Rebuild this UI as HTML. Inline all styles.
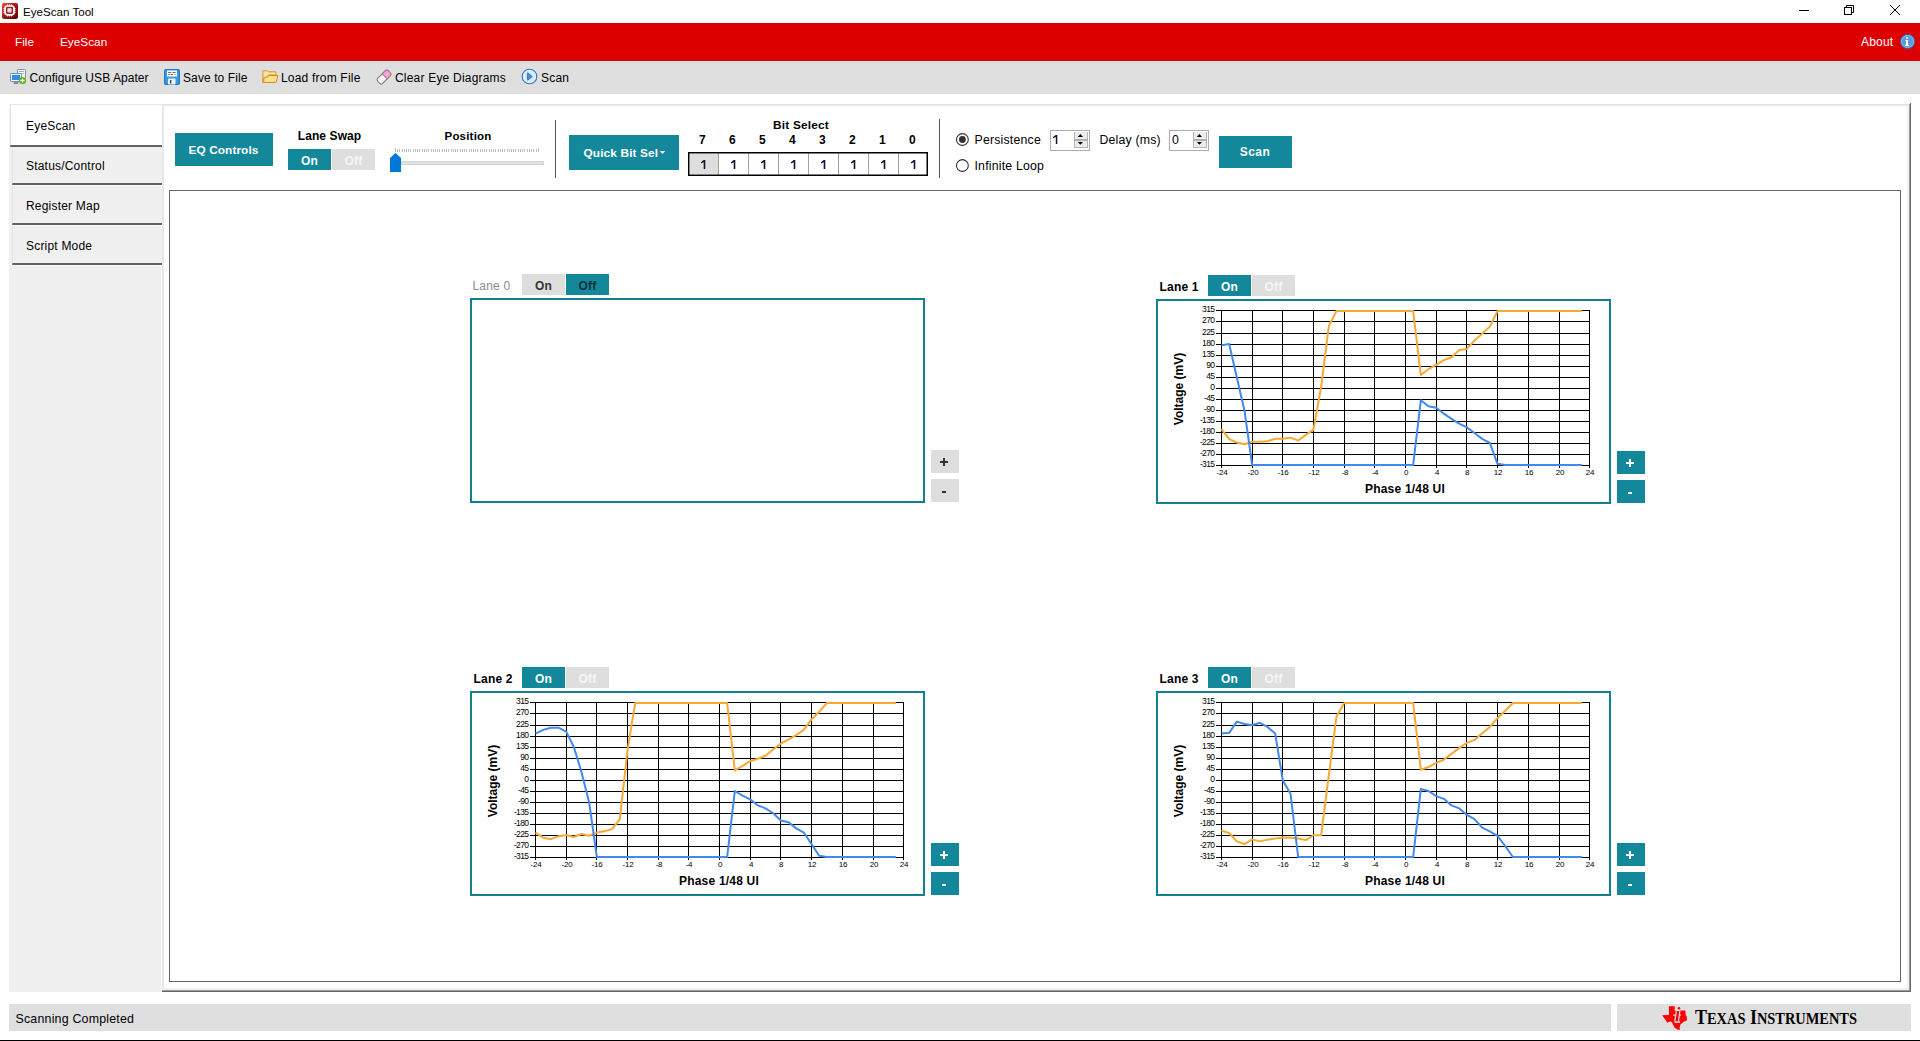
<!DOCTYPE html>
<html><head><meta charset="utf-8"><style>
html,body{margin:0;padding:0;width:1920px;height:1041px;overflow:hidden;background:#fff;font-family:"Liberation Sans", sans-serif;}
.r{position:absolute;}
.t{position:absolute;white-space:nowrap;font-family:"Liberation Sans", sans-serif;}
svg.r{overflow:visible}
</style></head><body>
<div class="r" style="left:0px;top:0px;width:1920px;height:23px;background:#fff"></div>
<svg class="r" style="left:2px;top:3px" width="16" height="16" viewBox="0 0 16 16">
<defs><linearGradient id="gi" x1="0" y1="0" x2="1" y2="1"><stop offset="0" stop-color="#f04838"/><stop offset="0.45" stop-color="#a81a18"/><stop offset="1" stop-color="#5c0404"/></linearGradient>
<radialGradient id="gc" cx="0.45" cy="0.45" r="0.6"><stop offset="0" stop-color="#fff"/><stop offset="1" stop-color="#d89a9a"/></radialGradient></defs>
<rect x="0" y="0" width="16" height="16" rx="2" fill="url(#gi)"/>
<rect x="3.1" y="3" width="8.8" height="8.8" rx="2.2" fill="none" stroke="#fff" stroke-width="1.7"/>
<g fill="#fff"><rect x="5" y="1.4" width="1.1" height="1.4"/><rect x="7" y="1.4" width="1.1" height="1.4"/><rect x="9" y="1.4" width="1.1" height="1.4"/>
<rect x="5" y="12" width="1.1" height="1.4"/><rect x="7" y="12" width="1.1" height="1.4"/><rect x="9" y="12" width="1.1" height="1.4"/>
<rect x="1.5" y="5" width="1.4" height="1.1"/><rect x="1.5" y="7" width="1.4" height="1.1"/><rect x="1.5" y="9" width="1.4" height="1.1"/>
<rect x="12.1" y="5" width="1.4" height="1.1"/><rect x="12.1" y="7" width="1.4" height="1.1"/><rect x="12.1" y="9" width="1.4" height="1.1"/></g>
<rect x="4.2" y="4.1" width="6.6" height="6.6" rx="1.5" fill="#9a2424"/>
<rect x="5.2" y="5.1" width="4.6" height="4.6" rx="1" fill="url(#gc)"/>
</svg>
<div class="t" style="left:23px;top:6.18px;font-size:11.6px;line-height:11.6px;font-weight:normal;color:#000;">EyeScan Tool</div>
<svg class="r" style="left:1790px;top:0px" width="130" height="23" viewBox="0 0 130 23">
<path d="M9 10.5H19" stroke="#000" stroke-width="1"/>
<rect x="54.5" y="7.5" width="7" height="7" fill="none" stroke="#000" stroke-width="1"/>
<path d="M56.5 7V5.5H63.5V12.5H62" fill="none" stroke="#000" stroke-width="1"/>
<path d="M100 5L110 15M110 5L100 15" stroke="#000" stroke-width="1"/>
</svg>
<div class="r" style="left:0px;top:23px;width:1920px;height:38px;background:#dd0000"></div>
<div class="t" style="left:15px;top:37.01px;font-size:11.8px;line-height:11.8px;font-weight:normal;color:#fff;">File</div>
<div class="t" style="left:60px;top:37.01px;font-size:11.8px;line-height:11.8px;font-weight:normal;color:#fff;">EyeScan</div>
<div class="t" style="left:1861px;top:35.84px;font-size:12px;line-height:12px;font-weight:normal;color:#fff;;letter-spacing:0.2px">About</div>
<svg class="r" style="left:1899px;top:33px" width="17" height="17" viewBox="0 0 17 17">
<circle cx="8.6" cy="8.5" r="7.1" fill="#5b9cd8" stroke="#1f66c2" stroke-width="0.9"/>
<circle cx="8.6" cy="8.5" r="6" fill="none" stroke="#a8cdef" stroke-width="0.7" opacity="0.8"/>
<rect x="7.1" y="4" width="1.9" height="1.7" rx="0.5" fill="#fff"/>
<path d="M6.6 7.1H9V11.8H10V12.9H6.1V11.8H7.1V8H6.6Z" fill="#fff"/>
</svg>
<div class="r" style="left:0px;top:61px;width:1920px;height:33px;background:#dfdfdf"></div>
<svg class="r" style="left:9px;top:68px" width="18" height="18" viewBox="0 0 18 18">
<rect x="8.5" y="1.5" width="8" height="9" rx="0.8" fill="#f4f8fc" stroke="#7a8da2" stroke-width="1"/>
<path d="M10 3.5h5M10 5.5h5" stroke="#9fb3c8" stroke-width="1"/>
<rect x="1.5" y="5.5" width="11" height="8" rx="0.8" fill="#eef4fa" stroke="#7a8da2" stroke-width="1"/>
<rect x="3" y="7" width="8" height="5" fill="#2d8ee8"/>
<rect x="4.5" y="14" width="5" height="2" rx="0.8" fill="#7a8da2"/>
<circle cx="13.5" cy="12.5" r="3.6" fill="#5fb01f"/>
<path d="M13.5 10.4v4.2M11.4 12.5h4.2" stroke="#fff" stroke-width="1.3"/>
</svg>
<div class="t" style="left:29.5px;top:71.84px;font-size:12px;line-height:12px;font-weight:normal;color:#000;;letter-spacing:0.05px">Configure USB Apater</div>
<svg class="r" style="left:164px;top:69px" width="16" height="16" viewBox="0 0 16 16">
<rect x="0.6" y="0.6" width="14.8" height="14.8" rx="1.5" fill="#3c9be0" stroke="#1a7cc4" stroke-width="1.2"/>
<rect x="3" y="1.5" width="10" height="6" rx="0.6" fill="#fff"/>
<path d="M4.2 3.5h3M8.5 3.5h3M4.2 5.5h1.5M6.5 5.5h2.5M10.5 5.5h1" stroke="#555" stroke-width="0.9"/>
<rect x="4" y="9.5" width="7.5" height="6" rx="0.8" fill="#eef2f6"/>
<rect x="6" y="11" width="1.3" height="3.5" fill="#333"/>
</svg>
<div class="t" style="left:183px;top:71.84px;font-size:12px;line-height:12px;font-weight:normal;color:#000;;letter-spacing:0.1px">Save to File</div>
<svg class="r" style="left:262px;top:70px" width="17" height="14" viewBox="0 0 17 14">
<path d="M0.8 1.5Q0.8 0.8 1.5 0.8H5.5L6.5 1.8H13.5Q14 1.8 14 2.4V5H6.5L5 7" fill="#fbe39a" stroke="#d9902a" stroke-width="1"/>
<path d="M0.8 1.5V12.5H14L16 5.5H6.8L5.2 7.2H2.2L0.8 12.5" fill="#f6d064" stroke="#d9902a" stroke-width="1"/>
<path d="M3 11.5H13.5L15 6.5H7.2L5.8 8H3.8Z" fill="#fde48b"/>
</svg>
<div class="t" style="left:281px;top:71.84px;font-size:12px;line-height:12px;font-weight:normal;color:#000;;letter-spacing:0.2px">Load from File</div>
<svg class="r" style="left:375px;top:68px" width="18" height="18" viewBox="0 0 18 18">
<g transform="rotate(-45 9 9)">
<rect x="1.5" y="5.5" width="15" height="7" rx="2" fill="#f2f2f2" stroke="#777" stroke-width="1"/>
<path d="M10 5.5H14.5Q16.5 5.5 16.5 7.5V10.5Q16.5 12.5 14.5 12.5H10Z" fill="#f0a8cc" stroke="#b06aa0" stroke-width="1"/>
</g>
</svg>
<div class="t" style="left:395px;top:71.84px;font-size:12px;line-height:12px;font-weight:normal;color:#000;;letter-spacing:0.2px">Clear Eye Diagrams</div>
<svg class="r" style="left:521px;top:68px" width="17" height="17" viewBox="0 0 17 17">
<defs><radialGradient id="gsc" cx="0.5" cy="0.5" r="0.5"><stop offset="0" stop-color="#b6dcf6"/><stop offset="1" stop-color="#eaf6fe"/></radialGradient></defs>
<circle cx="8.5" cy="8.5" r="7.3" fill="url(#gsc)" stroke="#3478c0" stroke-width="1.1"/>
<path d="M6.6 4.8L11.2 8.6L6.6 12.2Z" fill="#4a92d8" stroke="#2f6fb6" stroke-width="0.9" stroke-linejoin="round"/>
</svg>
<div class="t" style="left:541px;top:71.84px;font-size:12px;line-height:12px;font-weight:normal;color:#000;;letter-spacing:0.2px">Scan</div>
<div class="r" style="left:9px;top:104px;width:152px;height:888px;background:#f0f0f0"></div>
<div class="r" style="left:10px;top:104px;width:152px;height:42px;background:#fff;border-top:1px solid #e6e6e6;border-left:1px solid #e6e6e6"></div>
<div class="t" style="left:26px;top:119.84px;font-size:12px;line-height:12px;font-weight:normal;color:#000;;letter-spacing:0.2px">EyeScan</div>
<div class="r" style="left:12px;top:147px;width:149px;height:37px;background:#f0f0f0;border-left:1px solid #e4e4e4;border-right:1px solid #e4e4e4"></div>
<div class="t" style="left:26px;top:159.84px;font-size:12px;line-height:12px;font-weight:normal;color:#000;;letter-spacing:0.2px">Status/Control</div>
<div class="r" style="left:12px;top:187px;width:149px;height:37px;background:#f0f0f0;border-left:1px solid #e4e4e4;border-right:1px solid #e4e4e4"></div>
<div class="t" style="left:26px;top:199.84px;font-size:12px;line-height:12px;font-weight:normal;color:#000;;letter-spacing:0.2px">Register Map</div>
<div class="r" style="left:12px;top:227px;width:149px;height:37px;background:#f0f0f0;border-left:1px solid #e4e4e4;border-right:1px solid #e4e4e4"></div>
<div class="t" style="left:26px;top:239.84px;font-size:12px;line-height:12px;font-weight:normal;color:#000;;letter-spacing:0.2px">Script Mode</div>
<div class="r" style="left:10px;top:145px;width:152px;height:2px;background:#626262;border-radius:2px 0 0 1px"></div>
<div class="r" style="left:12px;top:183px;width:150px;height:2px;background:#626262;border-radius:2px 0 0 1px"></div>
<div class="r" style="left:12px;top:185px;width:149px;height:1px;background:#fafafa"></div>
<div class="r" style="left:12px;top:223px;width:150px;height:2px;background:#626262;border-radius:2px 0 0 1px"></div>
<div class="r" style="left:12px;top:225px;width:149px;height:1px;background:#fafafa"></div>
<div class="r" style="left:12px;top:263px;width:150px;height:2px;background:#626262;border-radius:2px 0 0 1px"></div>
<div class="r" style="left:12px;top:265px;width:149px;height:1px;background:#fafafa"></div>
<div class="r" style="left:162px;top:104px;width:1749px;height:888px;background:#fff;border-top:1px solid #e2e2e2;border-left:2px solid #e8e8e8;box-sizing:border-box"></div>
<div class="r" style="left:163px;top:105px;width:1746px;height:1px;background:#efefef"></div>
<div class="r" style="left:163px;top:988px;width:1747px;height:2px;background:#f0f0f0"></div>
<div class="r" style="left:162px;top:990px;width:1749px;height:1px;background:#9a9a9a"></div>
<div class="r" style="left:162px;top:991px;width:1749px;height:1px;background:#666"></div>
<div class="r" style="left:1907px;top:105px;width:2px;height:883px;background:#f0f0f0"></div>
<div class="r" style="left:1909px;top:104px;width:1px;height:886px;background:#a0a0a0"></div>
<div class="r" style="left:1910px;top:103px;width:1px;height:889px;background:#666"></div>
<div class="r" style="left:163px;top:106px;width:1744px;height:1px;background:#f6f6f6"></div>
<div class="r" style="left:169px;top:190px;width:1732px;height:792px;border:1px solid #666;box-sizing:border-box"></div>
<div class="r" style="left:175px;top:133px;width:98px;height:33px;background:#12889a"></div>
<div class="t" style="left:123.5px;width:200px;text-align:center;top:145.01px;font-size:11.8px;line-height:11.8px;font-weight:bold;color:#fff;;letter-spacing:0.1px">EQ Controls</div>
<div class="t" style="left:229.5px;width:200px;text-align:center;top:129.84px;font-size:12px;line-height:12px;font-weight:bold;color:#000;;letter-spacing:0.1px">Lane Swap</div>
<div class="r" style="left:288px;top:149px;width:43px;height:21px;background:#12889a"></div>
<div class="t" style="left:209.5px;width:200px;text-align:center;top:154.84px;font-size:12px;line-height:12px;font-weight:bold;color:#fff;;letter-spacing:0.2px">On</div>
<div class="r" style="left:332px;top:149px;width:43px;height:21px;background:#dedede"></div>
<div class="t" style="left:253.5px;width:200px;text-align:center;top:154.84px;font-size:12px;line-height:12px;font-weight:bold;color:#f6f6f6;;letter-spacing:0.2px">Off</div>
<div class="t" style="left:368px;width:200px;text-align:center;top:131.27px;font-size:11.5px;line-height:11.5px;font-weight:bold;color:#000;;letter-spacing:0.2px">Position</div>
<svg class="r" style="left:0;top:0" width="600" height="200" shape-rendering="crispEdges"><path d="M395.50 148V152M397.50 149V152M399.50 149V152M402.50 149V152M404.50 149V152M406.50 149V152M408.50 149V152M410.50 149V152M413.50 149V152M415.50 149V152M417.50 149V152M419.50 149V152M422.50 149V152M424.50 149V152M426.50 149V152M428.50 149V152M431.50 149V152M433.50 149V152M435.50 149V152M437.50 149V152M439.50 149V152M442.50 149V152M444.50 149V152M446.50 149V152M448.50 149V152M451.50 149V152M453.50 149V152M455.50 149V152M457.50 149V152M460.50 149V152M462.50 149V152M464.50 149V152M466.50 149V152M469.50 149V152M471.50 149V152M473.50 149V152M475.50 149V152M477.50 149V152M480.50 149V152M482.50 149V152M484.50 149V152M486.50 149V152M489.50 149V152M491.50 149V152M493.50 149V152M495.50 149V152M498.50 149V152M500.50 149V152M502.50 149V152M504.50 149V152M507.50 149V152M509.50 149V152M511.50 149V152M513.50 149V152M515.50 149V152M518.50 149V152M520.50 149V152M522.50 149V152M524.50 149V152M527.50 149V152M529.50 149V152M531.50 149V152M533.50 149V152M536.50 149V152M538.50 148V152" stroke="#bcbcbc" stroke-width="1"/></svg>
<div class="r" style="left:401px;top:161px;width:143px;height:4px;background:#dfe2e2;border:1px solid #d2d6d6;box-sizing:border-box"></div>
<svg class="r" style="left:389px;top:152px" width="13" height="21" viewBox="0 0 13 21"><path d="M1 6L6.5 1L12 6V20H1Z" fill="#0078d7"/></svg>
<div class="r" style="left:555px;top:120px;width:1px;height:58px;background:#555"></div>
<div class="r" style="left:569px;top:135px;width:110px;height:35px;background:#12889a"></div>
<div class="t" style="left:583.5px;top:148.01px;font-size:11.8px;line-height:11.8px;font-weight:bold;color:#fff;;letter-spacing:0.15px">Quick Bit Sel</div>
<svg class="r" style="left:659px;top:150px" width="7" height="5" viewBox="0 0 7 5"><path d="M0.8 0.9H6.2L3.5 4.1Z" fill="#fff"/></svg>
<div class="t" style="left:701px;width:200px;text-align:center;top:120.01px;font-size:11.8px;line-height:11.8px;font-weight:bold;color:#000;;letter-spacing:0.2px">Bit Select</div>
<div class="t" style="left:602.5px;width:200px;text-align:center;top:133.84px;font-size:12px;line-height:12px;font-weight:bold;color:#000;;letter-spacing:0.2px">7</div>
<div class="t" style="left:632.5px;width:200px;text-align:center;top:133.84px;font-size:12px;line-height:12px;font-weight:bold;color:#000;;letter-spacing:0.2px">6</div>
<div class="t" style="left:662.5px;width:200px;text-align:center;top:133.84px;font-size:12px;line-height:12px;font-weight:bold;color:#000;;letter-spacing:0.2px">5</div>
<div class="t" style="left:692.5px;width:200px;text-align:center;top:133.84px;font-size:12px;line-height:12px;font-weight:bold;color:#000;;letter-spacing:0.2px">4</div>
<div class="t" style="left:722.5px;width:200px;text-align:center;top:133.84px;font-size:12px;line-height:12px;font-weight:bold;color:#000;;letter-spacing:0.2px">3</div>
<div class="t" style="left:752.5px;width:200px;text-align:center;top:133.84px;font-size:12px;line-height:12px;font-weight:bold;color:#000;;letter-spacing:0.2px">2</div>
<div class="t" style="left:782.5px;width:200px;text-align:center;top:133.84px;font-size:12px;line-height:12px;font-weight:bold;color:#000;;letter-spacing:0.2px">1</div>
<div class="t" style="left:812.5px;width:200px;text-align:center;top:133.84px;font-size:12px;line-height:12px;font-weight:bold;color:#000;;letter-spacing:0.2px">0</div>
<div class="r" style="left:688px;top:152px;width:240px;height:24px;background:#fff"></div>
<div class="r" style="left:690px;top:154px;width:28px;height:20px;background:#dedede"></div>
<div class="r" style="left:718px;top:153px;width:1px;height:22px;background:#a0a0a0"></div>
<div class="r" style="left:748px;top:153px;width:1px;height:22px;background:#a0a0a0"></div>
<div class="r" style="left:778px;top:153px;width:1px;height:22px;background:#a0a0a0"></div>
<div class="r" style="left:808px;top:153px;width:1px;height:22px;background:#a0a0a0"></div>
<div class="r" style="left:838px;top:153px;width:1px;height:22px;background:#a0a0a0"></div>
<div class="r" style="left:868px;top:153px;width:1px;height:22px;background:#a0a0a0"></div>
<div class="r" style="left:898px;top:153px;width:1px;height:22px;background:#a0a0a0"></div>
<svg class="r" style="left:688px;top:152px" width="240" height="24"><rect x="0.75" y="0.75" width="238.5" height="22.5" fill="none" stroke="#000" stroke-width="1.5"/></svg>
<svg class="r" style="left:0;top:0" width="1000" height="200"><path d="M703.7 160H705.3V169H703.7V162.2L701 163.5V162.3Z" fill="#1a1030"/><path d="M733.7 160H735.3V169H733.7V162.2L731 163.5V162.3Z" fill="#1a1030"/><path d="M763.7 160H765.3V169H763.7V162.2L761 163.5V162.3Z" fill="#1a1030"/><path d="M793.7 160H795.3V169H793.7V162.2L791 163.5V162.3Z" fill="#1a1030"/><path d="M823.7 160H825.3V169H823.7V162.2L821 163.5V162.3Z" fill="#1a1030"/><path d="M853.7 160H855.3V169H853.7V162.2L851 163.5V162.3Z" fill="#1a1030"/><path d="M883.7 160H885.3V169H883.7V162.2L881 163.5V162.3Z" fill="#1a1030"/><path d="M913.7 160H915.3V169H913.7V162.2L911 163.5V162.3Z" fill="#1a1030"/></svg>
<div class="r" style="left:939px;top:119px;width:1px;height:59px;background:#555"></div>
<svg class="r" style="left:955px;top:132px" width="15" height="40" viewBox="0 0 15 40">
<circle cx="7.4" cy="7.5" r="5.9" fill="#fff" stroke="#333" stroke-width="1.1"/>
<circle cx="7.4" cy="7.5" r="3.4" fill="#333"/>
<circle cx="7.4" cy="33.5" r="5.9" fill="#fff" stroke="#333" stroke-width="1.1"/>
</svg>
<div class="t" style="left:974.5px;top:133.59px;font-size:12.3px;line-height:12.3px;font-weight:normal;color:#000;;letter-spacing:0.2px">Persistence</div>
<div class="t" style="left:974.5px;top:159.59px;font-size:12.3px;line-height:12.3px;font-weight:normal;color:#000;;letter-spacing:0.2px">Infinite Loop</div>
<div class="r" style="left:1050px;top:130px;width:40px;height:21px;border:1px solid #acacac;box-sizing:border-box;background:#fff"></div>
<svg class="r" style="left:0;top:0" width="1300" height="200"><path d="M1055.8 135H1057.3V144H1055.8V137L1053 138.3V137.1Z" fill="#1a1030"/></svg>
<div class="r" style="left:1074px;top:132px;width:14px;height:16px;background:#ececec"></div>
<svg class="r" style="left:1074px;top:132px" width="14" height="16" viewBox="0 0 14 16" shape-rendering="crispEdges"><path d="M0.5 0V16M13.5 0V16M0 15.5H14" stroke="#b4b4b4" stroke-width="1" fill="none"/><rect x="0" y="7" width="14" height="2" fill="#b0b0b0"/></svg>
<svg class="r" style="left:1074px;top:132px" width="14" height="16" viewBox="0 0 14 16"><path d="M3.8 4.9H9L6.4 2.1Z" fill="#000"/><path d="M3.8 10.1H9L6.4 12.8Z" fill="#000"/></svg>
<div class="t" style="left:1099.4px;top:133.59px;font-size:12.3px;line-height:12.3px;font-weight:normal;color:#000;;letter-spacing:0.2px">Delay (ms)</div>
<div class="r" style="left:1169px;top:130px;width:40px;height:21px;border:1px solid #acacac;box-sizing:border-box;background:#fff"></div>
<div class="t" style="left:1172px;top:133.59px;font-size:12.3px;line-height:12.3px;font-weight:normal;color:#000;">0</div>
<div class="r" style="left:1193px;top:132px;width:14px;height:16px;background:#ececec"></div>
<svg class="r" style="left:1193px;top:132px" width="14" height="16" viewBox="0 0 14 16" shape-rendering="crispEdges"><path d="M0.5 0V16M13.5 0V16M0 15.5H14" stroke="#b4b4b4" stroke-width="1" fill="none"/><rect x="0" y="7" width="14" height="2" fill="#b0b0b0"/></svg>
<svg class="r" style="left:1193px;top:132px" width="14" height="16" viewBox="0 0 14 16"><path d="M3.8 4.9H9L6.4 2.1Z" fill="#000"/><path d="M3.8 10.1H9L6.4 12.8Z" fill="#000"/></svg>
<div class="r" style="left:1219px;top:136px;width:73px;height:32px;background:#12889a"></div>
<div class="t" style="left:1155px;width:200px;text-align:center;top:145.84px;font-size:12px;line-height:12px;font-weight:bold;color:#fff;;letter-spacing:0.5px">Scan</div>
<div class="t" style="left:472.5px;top:279.84px;font-size:12px;line-height:12px;font-weight:normal;color:#8c8c8c;;letter-spacing:0.2px">Lane 0</div>
<div class="r" style="left:522px;top:274px;width:43px;height:21px;background:#dedede"></div>
<div class="t" style="left:443.5px;width:200px;text-align:center;top:279.84px;font-size:12px;line-height:12px;font-weight:bold;color:#333;;letter-spacing:0.2px">On</div>
<div class="r" style="left:566px;top:274px;width:43px;height:21px;background:#12889a"></div>
<div class="t" style="left:487.5px;width:200px;text-align:center;top:279.84px;font-size:12px;line-height:12px;font-weight:bold;color:#0e2f3a;;letter-spacing:0.2px">Off</div>
<div class="r" style="left:470px;top:298px;width:455px;height:205px;border:2px solid #11808f;box-sizing:border-box"></div>
<div class="r" style="left:931px;top:450px;width:28px;height:23px;background:#dedede"></div>
<div class="r" style="left:940px;top:461px;width:8px;height:2px;background:#333"></div>
<div class="r" style="left:943px;top:458px;width:2px;height:8px;background:#333"></div>
<div class="r" style="left:931px;top:479px;width:28px;height:23px;background:#dedede"></div>
<div class="r" style="left:942px;top:491px;width:4px;height:2px;background:#333"></div>
<div class="t" style="left:1159.5px;top:280.84px;font-size:12px;line-height:12px;font-weight:bold;color:#000;;letter-spacing:0.2px">Lane 1</div>
<div class="r" style="left:1208px;top:275px;width:43px;height:21px;background:#12889a"></div>
<div class="t" style="left:1129.5px;width:200px;text-align:center;top:280.84px;font-size:12px;line-height:12px;font-weight:bold;color:#fff;;letter-spacing:0.2px">On</div>
<div class="r" style="left:1252px;top:275px;width:43px;height:21px;background:#dedede"></div>
<div class="t" style="left:1173.5px;width:200px;text-align:center;top:280.84px;font-size:12px;line-height:12px;font-weight:bold;color:#f6f6f6;;letter-spacing:0.2px">Off</div>
<div class="r" style="left:1156px;top:299px;width:455px;height:205px;border:2px solid #11808f;box-sizing:border-box"></div>
<div class="r" style="left:1617px;top:451px;width:28px;height:23px;background:#12889a"></div>
<div class="r" style="left:1626px;top:462px;width:8px;height:2px;background:#fff"></div>
<div class="r" style="left:1629px;top:459px;width:2px;height:8px;background:#fff"></div>
<div class="r" style="left:1617px;top:480px;width:28px;height:23px;background:#12889a"></div>
<div class="r" style="left:1628px;top:492px;width:4px;height:2px;background:#fff"></div>
<svg class="r" style="left:0;top:0" width="1920" height="1041"><path d="M1221.5 310V468M1252.5 310V468M1282.5 310V468M1313.5 310V468M1344.5 310V468M1374.5 310V468M1405.5 310V468M1436.5 310V468M1466.5 310V468M1497.5 310V468M1528.5 310V468M1559.5 310V468M1589.5 310V468M1216 310.5H1590M1216 321.5H1590M1216 333.5H1590M1216 344.5H1590M1216 355.5H1590M1216 366.5H1590M1216 377.5H1590M1216 388.5H1590M1216 399.5H1590M1216 410.5H1590M1216 421.5H1590M1216 432.5H1590M1216 443.5H1590M1216 454.5H1590M1216 465.5H1590" stroke="#000" stroke-width="1" fill="none" shape-rendering="crispEdges"/><polyline points="1221.50,429.07 1229.17,439.09 1236.83,442.51 1244.50,444.22 1252.17,441.78 1259.83,441.78 1267.50,441.29 1275.17,438.84 1282.83,438.84 1290.50,437.62 1298.17,440.56 1305.83,434.93 1313.50,429.56 1321.17,386.78 1328.83,326.16 1336.50,311.00 1344.17,311.00 1351.83,311.00 1359.50,311.00 1367.17,311.00 1374.83,311.00 1382.50,311.00 1390.17,311.00 1397.83,311.00 1405.50,311.00 1413.17,311.00 1420.83,375.04 1428.50,369.18 1436.17,364.78 1443.83,360.13 1451.50,357.20 1459.17,350.11 1466.83,348.89 1474.50,340.58 1482.17,333.73 1489.83,326.64 1497.50,311.00 1505.17,311.00 1512.83,311.00 1520.50,311.00 1528.17,311.00 1535.83,311.00 1543.50,311.00 1551.17,311.00 1558.83,311.00 1566.50,311.00 1574.17,311.00 1581.83,311.00" fill="none" stroke="#f9a832" stroke-width="2" stroke-linejoin="round"/><polyline points="1221.50,345.22 1229.17,344.00 1236.83,377.49 1244.50,410.73 1252.17,465.00 1259.83,465.00 1267.50,465.00 1275.17,465.00 1282.83,465.00 1290.50,465.00 1298.17,465.00 1305.83,465.00 1313.50,465.00 1321.17,465.00 1328.83,465.00 1336.50,465.00 1344.17,465.00 1351.83,465.00 1359.50,465.00 1367.17,465.00 1374.83,465.00 1382.50,465.00 1390.17,465.00 1397.83,465.00 1405.50,465.00 1413.17,465.00 1420.83,400.22 1428.50,406.33 1436.17,407.80 1443.83,413.67 1451.50,418.80 1459.17,423.69 1466.83,427.36 1474.50,432.98 1482.17,438.84 1489.83,443.00 1497.50,463.78 1505.17,465.00 1512.83,465.00 1520.50,465.00 1528.17,465.00 1535.83,465.00 1543.50,465.00 1551.17,465.00 1558.83,465.00 1566.50,465.00 1574.17,465.00 1581.83,465.00" fill="none" stroke="#4189ec" stroke-width="2" stroke-linejoin="round"/></svg>
<div class="t" style="left:1014.5px;width:200px;text-align:right;top:304.80px;font-size:8.5px;line-height:8.5px;font-weight:normal;color:#000;letter-spacing:-0.6px">315</div>
<div class="t" style="left:1014.5px;width:200px;text-align:right;top:315.80px;font-size:8.5px;line-height:8.5px;font-weight:normal;color:#000;letter-spacing:-0.6px">270</div>
<div class="t" style="left:1014.5px;width:200px;text-align:right;top:327.80px;font-size:8.5px;line-height:8.5px;font-weight:normal;color:#000;letter-spacing:-0.6px">225</div>
<div class="t" style="left:1014.5px;width:200px;text-align:right;top:338.80px;font-size:8.5px;line-height:8.5px;font-weight:normal;color:#000;letter-spacing:-0.6px">180</div>
<div class="t" style="left:1014.5px;width:200px;text-align:right;top:349.80px;font-size:8.5px;line-height:8.5px;font-weight:normal;color:#000;letter-spacing:-0.6px">135</div>
<div class="t" style="left:1014.5px;width:200px;text-align:right;top:360.80px;font-size:8.5px;line-height:8.5px;font-weight:normal;color:#000;letter-spacing:-0.6px">90</div>
<div class="t" style="left:1014.5px;width:200px;text-align:right;top:371.80px;font-size:8.5px;line-height:8.5px;font-weight:normal;color:#000;letter-spacing:-0.6px">45</div>
<div class="t" style="left:1014.5px;width:200px;text-align:right;top:382.80px;font-size:8.5px;line-height:8.5px;font-weight:normal;color:#000;letter-spacing:-0.6px">0</div>
<div class="t" style="left:1014.5px;width:200px;text-align:right;top:393.80px;font-size:8.5px;line-height:8.5px;font-weight:normal;color:#000;letter-spacing:-0.6px">-45</div>
<div class="t" style="left:1014.5px;width:200px;text-align:right;top:404.80px;font-size:8.5px;line-height:8.5px;font-weight:normal;color:#000;letter-spacing:-0.6px">-90</div>
<div class="t" style="left:1014.5px;width:200px;text-align:right;top:415.80px;font-size:8.5px;line-height:8.5px;font-weight:normal;color:#000;letter-spacing:-0.6px">-135</div>
<div class="t" style="left:1014.5px;width:200px;text-align:right;top:426.80px;font-size:8.5px;line-height:8.5px;font-weight:normal;color:#000;letter-spacing:-0.6px">-180</div>
<div class="t" style="left:1014.5px;width:200px;text-align:right;top:437.80px;font-size:8.5px;line-height:8.5px;font-weight:normal;color:#000;letter-spacing:-0.6px">-225</div>
<div class="t" style="left:1014.5px;width:200px;text-align:right;top:448.80px;font-size:8.5px;line-height:8.5px;font-weight:normal;color:#000;letter-spacing:-0.6px">-270</div>
<div class="t" style="left:1014.5px;width:200px;text-align:right;top:459.80px;font-size:8.5px;line-height:8.5px;font-weight:normal;color:#000;letter-spacing:-0.6px">-315</div>
<div class="t" style="left:1122px;width:200px;text-align:center;top:469.23px;font-size:8px;line-height:8px;font-weight:normal;color:#000;letter-spacing:-0.2px">-24</div>
<div class="t" style="left:1153px;width:200px;text-align:center;top:469.23px;font-size:8px;line-height:8px;font-weight:normal;color:#000;letter-spacing:-0.2px">-20</div>
<div class="t" style="left:1183px;width:200px;text-align:center;top:469.23px;font-size:8px;line-height:8px;font-weight:normal;color:#000;letter-spacing:-0.2px">-16</div>
<div class="t" style="left:1214px;width:200px;text-align:center;top:469.23px;font-size:8px;line-height:8px;font-weight:normal;color:#000;letter-spacing:-0.2px">-12</div>
<div class="t" style="left:1245px;width:200px;text-align:center;top:469.23px;font-size:8px;line-height:8px;font-weight:normal;color:#000;letter-spacing:-0.2px">-8</div>
<div class="t" style="left:1275px;width:200px;text-align:center;top:469.23px;font-size:8px;line-height:8px;font-weight:normal;color:#000;letter-spacing:-0.2px">-4</div>
<div class="t" style="left:1306px;width:200px;text-align:center;top:469.23px;font-size:8px;line-height:8px;font-weight:normal;color:#000;letter-spacing:-0.2px">0</div>
<div class="t" style="left:1337px;width:200px;text-align:center;top:469.23px;font-size:8px;line-height:8px;font-weight:normal;color:#000;letter-spacing:-0.2px">4</div>
<div class="t" style="left:1367px;width:200px;text-align:center;top:469.23px;font-size:8px;line-height:8px;font-weight:normal;color:#000;letter-spacing:-0.2px">8</div>
<div class="t" style="left:1398px;width:200px;text-align:center;top:469.23px;font-size:8px;line-height:8px;font-weight:normal;color:#000;letter-spacing:-0.2px">12</div>
<div class="t" style="left:1429px;width:200px;text-align:center;top:469.23px;font-size:8px;line-height:8px;font-weight:normal;color:#000;letter-spacing:-0.2px">16</div>
<div class="t" style="left:1460px;width:200px;text-align:center;top:469.23px;font-size:8px;line-height:8px;font-weight:normal;color:#000;letter-spacing:-0.2px">20</div>
<div class="t" style="left:1490px;width:200px;text-align:center;top:469.23px;font-size:8px;line-height:8px;font-weight:normal;color:#000;letter-spacing:-0.2px">24</div>
<div class="t" style="left:1305px;width:200px;text-align:center;top:482.84px;font-size:12px;line-height:12px;font-weight:bold;color:#000;;letter-spacing:0.2px">Phase 1/48 UI</div>
<div class="t" style="left:1119px;top:382.5px;width:120px;height:12px;line-height:12px;font-size:12px;font-weight:bold;text-align:center;transform:rotate(-90deg);transform-origin:60px 6px">Voltage (mV)</div>
<div class="t" style="left:473.5px;top:672.84px;font-size:12px;line-height:12px;font-weight:bold;color:#000;;letter-spacing:0.2px">Lane 2</div>
<div class="r" style="left:522px;top:667px;width:43px;height:21px;background:#12889a"></div>
<div class="t" style="left:443.5px;width:200px;text-align:center;top:672.84px;font-size:12px;line-height:12px;font-weight:bold;color:#fff;;letter-spacing:0.2px">On</div>
<div class="r" style="left:566px;top:667px;width:43px;height:21px;background:#dedede"></div>
<div class="t" style="left:487.5px;width:200px;text-align:center;top:672.84px;font-size:12px;line-height:12px;font-weight:bold;color:#f6f6f6;;letter-spacing:0.2px">Off</div>
<div class="r" style="left:470px;top:691px;width:455px;height:205px;border:2px solid #11808f;box-sizing:border-box"></div>
<div class="r" style="left:931px;top:843px;width:28px;height:23px;background:#12889a"></div>
<div class="r" style="left:940px;top:854px;width:8px;height:2px;background:#fff"></div>
<div class="r" style="left:943px;top:851px;width:2px;height:8px;background:#fff"></div>
<div class="r" style="left:931px;top:872px;width:28px;height:23px;background:#12889a"></div>
<div class="r" style="left:942px;top:884px;width:4px;height:2px;background:#fff"></div>
<svg class="r" style="left:0;top:0" width="1920" height="1041"><path d="M535.5 702V860M566.5 702V860M596.5 702V860M627.5 702V860M658.5 702V860M688.5 702V860M719.5 702V860M750.5 702V860M780.5 702V860M811.5 702V860M842.5 702V860M873.5 702V860M903.5 702V860M530 702.5H904M530 713.5H904M530 725.5H904M530 736.5H904M530 747.5H904M530 758.5H904M530 769.5H904M530 780.5H904M530 791.5H904M530 802.5H904M530 813.5H904M530 824.5H904M530 835.5H904M530 846.5H904M530 857.5H904" stroke="#000" stroke-width="1" fill="none" shape-rendering="crispEdges"/><polyline points="535.50,832.56 543.17,837.69 550.83,839.16 558.50,836.22 566.17,835.00 573.83,836.96 581.50,834.02 589.17,835.73 596.83,832.56 604.50,831.33 612.17,828.89 619.83,819.11 627.50,750.42 635.17,703.00 642.83,703.00 650.50,703.00 658.17,703.00 665.83,703.00 673.50,703.00 681.17,703.00 688.83,703.00 696.50,703.00 704.17,703.00 711.83,703.00 719.50,703.00 727.17,703.00 734.83,770.47 742.50,765.82 750.17,761.18 757.83,758.73 765.50,755.80 773.17,749.44 780.83,743.58 788.50,739.42 796.17,735.02 803.83,729.89 811.50,719.38 819.17,711.80 826.83,703.00 834.50,703.00 842.17,703.00 849.83,703.00 857.50,703.00 865.17,703.00 872.83,703.00 880.50,703.00 888.17,703.00 895.83,703.00" fill="none" stroke="#f9a832" stroke-width="2" stroke-linejoin="round"/><polyline points="535.50,733.56 543.17,729.89 550.83,727.69 558.50,727.69 566.17,731.60 573.83,747.00 581.50,772.18 589.17,802.49 596.83,857.00 604.50,857.00 612.17,857.00 619.83,857.00 627.50,857.00 635.17,857.00 642.83,857.00 650.50,857.00 658.17,857.00 665.83,857.00 673.50,857.00 681.17,857.00 688.83,857.00 696.50,857.00 704.17,857.00 711.83,857.00 719.50,857.00 727.17,857.00 734.83,791.00 742.50,795.64 750.17,799.31 757.83,805.42 765.50,808.36 773.17,813.24 780.83,820.58 788.50,822.29 796.17,828.40 803.83,832.56 811.50,844.04 819.17,855.78 826.83,857.00 834.50,857.00 842.17,857.00 849.83,857.00 857.50,857.00 865.17,857.00 872.83,857.00 880.50,857.00 888.17,857.00 895.83,857.00" fill="none" stroke="#4189ec" stroke-width="2" stroke-linejoin="round"/></svg>
<div class="t" style="left:328.5px;width:200px;text-align:right;top:696.80px;font-size:8.5px;line-height:8.5px;font-weight:normal;color:#000;letter-spacing:-0.6px">315</div>
<div class="t" style="left:328.5px;width:200px;text-align:right;top:707.80px;font-size:8.5px;line-height:8.5px;font-weight:normal;color:#000;letter-spacing:-0.6px">270</div>
<div class="t" style="left:328.5px;width:200px;text-align:right;top:719.80px;font-size:8.5px;line-height:8.5px;font-weight:normal;color:#000;letter-spacing:-0.6px">225</div>
<div class="t" style="left:328.5px;width:200px;text-align:right;top:730.80px;font-size:8.5px;line-height:8.5px;font-weight:normal;color:#000;letter-spacing:-0.6px">180</div>
<div class="t" style="left:328.5px;width:200px;text-align:right;top:741.80px;font-size:8.5px;line-height:8.5px;font-weight:normal;color:#000;letter-spacing:-0.6px">135</div>
<div class="t" style="left:328.5px;width:200px;text-align:right;top:752.80px;font-size:8.5px;line-height:8.5px;font-weight:normal;color:#000;letter-spacing:-0.6px">90</div>
<div class="t" style="left:328.5px;width:200px;text-align:right;top:763.80px;font-size:8.5px;line-height:8.5px;font-weight:normal;color:#000;letter-spacing:-0.6px">45</div>
<div class="t" style="left:328.5px;width:200px;text-align:right;top:774.80px;font-size:8.5px;line-height:8.5px;font-weight:normal;color:#000;letter-spacing:-0.6px">0</div>
<div class="t" style="left:328.5px;width:200px;text-align:right;top:785.80px;font-size:8.5px;line-height:8.5px;font-weight:normal;color:#000;letter-spacing:-0.6px">-45</div>
<div class="t" style="left:328.5px;width:200px;text-align:right;top:796.80px;font-size:8.5px;line-height:8.5px;font-weight:normal;color:#000;letter-spacing:-0.6px">-90</div>
<div class="t" style="left:328.5px;width:200px;text-align:right;top:807.80px;font-size:8.5px;line-height:8.5px;font-weight:normal;color:#000;letter-spacing:-0.6px">-135</div>
<div class="t" style="left:328.5px;width:200px;text-align:right;top:818.80px;font-size:8.5px;line-height:8.5px;font-weight:normal;color:#000;letter-spacing:-0.6px">-180</div>
<div class="t" style="left:328.5px;width:200px;text-align:right;top:829.80px;font-size:8.5px;line-height:8.5px;font-weight:normal;color:#000;letter-spacing:-0.6px">-225</div>
<div class="t" style="left:328.5px;width:200px;text-align:right;top:840.80px;font-size:8.5px;line-height:8.5px;font-weight:normal;color:#000;letter-spacing:-0.6px">-270</div>
<div class="t" style="left:328.5px;width:200px;text-align:right;top:851.80px;font-size:8.5px;line-height:8.5px;font-weight:normal;color:#000;letter-spacing:-0.6px">-315</div>
<div class="t" style="left:436px;width:200px;text-align:center;top:861.23px;font-size:8px;line-height:8px;font-weight:normal;color:#000;letter-spacing:-0.2px">-24</div>
<div class="t" style="left:467px;width:200px;text-align:center;top:861.23px;font-size:8px;line-height:8px;font-weight:normal;color:#000;letter-spacing:-0.2px">-20</div>
<div class="t" style="left:497px;width:200px;text-align:center;top:861.23px;font-size:8px;line-height:8px;font-weight:normal;color:#000;letter-spacing:-0.2px">-16</div>
<div class="t" style="left:528px;width:200px;text-align:center;top:861.23px;font-size:8px;line-height:8px;font-weight:normal;color:#000;letter-spacing:-0.2px">-12</div>
<div class="t" style="left:559px;width:200px;text-align:center;top:861.23px;font-size:8px;line-height:8px;font-weight:normal;color:#000;letter-spacing:-0.2px">-8</div>
<div class="t" style="left:589px;width:200px;text-align:center;top:861.23px;font-size:8px;line-height:8px;font-weight:normal;color:#000;letter-spacing:-0.2px">-4</div>
<div class="t" style="left:620px;width:200px;text-align:center;top:861.23px;font-size:8px;line-height:8px;font-weight:normal;color:#000;letter-spacing:-0.2px">0</div>
<div class="t" style="left:651px;width:200px;text-align:center;top:861.23px;font-size:8px;line-height:8px;font-weight:normal;color:#000;letter-spacing:-0.2px">4</div>
<div class="t" style="left:681px;width:200px;text-align:center;top:861.23px;font-size:8px;line-height:8px;font-weight:normal;color:#000;letter-spacing:-0.2px">8</div>
<div class="t" style="left:712px;width:200px;text-align:center;top:861.23px;font-size:8px;line-height:8px;font-weight:normal;color:#000;letter-spacing:-0.2px">12</div>
<div class="t" style="left:743px;width:200px;text-align:center;top:861.23px;font-size:8px;line-height:8px;font-weight:normal;color:#000;letter-spacing:-0.2px">16</div>
<div class="t" style="left:774px;width:200px;text-align:center;top:861.23px;font-size:8px;line-height:8px;font-weight:normal;color:#000;letter-spacing:-0.2px">20</div>
<div class="t" style="left:804px;width:200px;text-align:center;top:861.23px;font-size:8px;line-height:8px;font-weight:normal;color:#000;letter-spacing:-0.2px">24</div>
<div class="t" style="left:619px;width:200px;text-align:center;top:874.84px;font-size:12px;line-height:12px;font-weight:bold;color:#000;;letter-spacing:0.2px">Phase 1/48 UI</div>
<div class="t" style="left:433px;top:774.5px;width:120px;height:12px;line-height:12px;font-size:12px;font-weight:bold;text-align:center;transform:rotate(-90deg);transform-origin:60px 6px">Voltage (mV)</div>
<div class="t" style="left:1159.5px;top:672.84px;font-size:12px;line-height:12px;font-weight:bold;color:#000;;letter-spacing:0.2px">Lane 3</div>
<div class="r" style="left:1208px;top:667px;width:43px;height:21px;background:#12889a"></div>
<div class="t" style="left:1129.5px;width:200px;text-align:center;top:672.84px;font-size:12px;line-height:12px;font-weight:bold;color:#fff;;letter-spacing:0.2px">On</div>
<div class="r" style="left:1252px;top:667px;width:43px;height:21px;background:#dedede"></div>
<div class="t" style="left:1173.5px;width:200px;text-align:center;top:672.84px;font-size:12px;line-height:12px;font-weight:bold;color:#f6f6f6;;letter-spacing:0.2px">Off</div>
<div class="r" style="left:1156px;top:691px;width:455px;height:205px;border:2px solid #11808f;box-sizing:border-box"></div>
<div class="r" style="left:1617px;top:843px;width:28px;height:23px;background:#12889a"></div>
<div class="r" style="left:1626px;top:854px;width:8px;height:2px;background:#fff"></div>
<div class="r" style="left:1629px;top:851px;width:2px;height:8px;background:#fff"></div>
<div class="r" style="left:1617px;top:872px;width:28px;height:23px;background:#12889a"></div>
<div class="r" style="left:1628px;top:884px;width:4px;height:2px;background:#fff"></div>
<svg class="r" style="left:0;top:0" width="1920" height="1041"><path d="M1221.5 702V860M1252.5 702V860M1282.5 702V860M1313.5 702V860M1344.5 702V860M1374.5 702V860M1405.5 702V860M1436.5 702V860M1466.5 702V860M1497.5 702V860M1528.5 702V860M1559.5 702V860M1589.5 702V860M1216 702.5H1590M1216 713.5H1590M1216 725.5H1590M1216 736.5H1590M1216 747.5H1590M1216 758.5H1590M1216 769.5H1590M1216 780.5H1590M1216 791.5H1590M1216 802.5H1590M1216 813.5H1590M1216 824.5H1590M1216 835.5H1590M1216 846.5H1590M1216 857.5H1590" stroke="#000" stroke-width="1" fill="none" shape-rendering="crispEdges"/><polyline points="1221.50,830.60 1229.17,833.04 1236.83,841.36 1244.50,844.04 1252.17,839.40 1259.83,841.36 1267.50,839.64 1275.17,838.42 1282.83,837.44 1290.50,837.69 1298.17,838.42 1305.83,840.13 1313.50,835.24 1321.17,835.24 1328.83,775.11 1336.50,716.44 1344.17,703.00 1351.83,703.00 1359.50,703.00 1367.17,703.00 1374.83,703.00 1382.50,703.00 1390.17,703.00 1397.83,703.00 1405.50,703.00 1413.17,703.00 1420.83,769.73 1428.50,767.04 1436.17,762.89 1443.83,759.71 1451.50,753.84 1459.17,747.98 1466.83,742.84 1474.50,739.91 1482.17,733.31 1489.83,726.96 1497.50,718.16 1505.17,710.82 1512.83,703.00 1520.50,703.00 1528.17,703.00 1535.83,703.00 1543.50,703.00 1551.17,703.00 1558.83,703.00 1566.50,703.00 1574.17,703.00 1581.83,703.00" fill="none" stroke="#f9a832" stroke-width="2" stroke-linejoin="round"/><polyline points="1221.50,733.56 1229.17,732.82 1236.83,721.58 1244.50,724.02 1252.17,725.24 1259.83,722.80 1267.50,726.96 1275.17,733.56 1282.83,780.49 1290.50,793.69 1298.17,857.00 1305.83,857.00 1313.50,857.00 1321.17,857.00 1328.83,857.00 1336.50,857.00 1344.17,857.00 1351.83,857.00 1359.50,857.00 1367.17,857.00 1374.83,857.00 1382.50,857.00 1390.17,857.00 1397.83,857.00 1405.50,857.00 1413.17,857.00 1420.83,789.04 1428.50,791.00 1436.17,796.13 1443.83,798.82 1451.50,805.42 1459.17,808.36 1466.83,814.96 1474.50,819.11 1482.17,827.67 1489.83,831.33 1497.50,835.98 1505.17,846.00 1512.83,857.00 1520.50,857.00 1528.17,857.00 1535.83,857.00 1543.50,857.00 1551.17,857.00 1558.83,857.00 1566.50,857.00 1574.17,857.00 1581.83,857.00" fill="none" stroke="#4189ec" stroke-width="2" stroke-linejoin="round"/></svg>
<div class="t" style="left:1014.5px;width:200px;text-align:right;top:696.80px;font-size:8.5px;line-height:8.5px;font-weight:normal;color:#000;letter-spacing:-0.6px">315</div>
<div class="t" style="left:1014.5px;width:200px;text-align:right;top:707.80px;font-size:8.5px;line-height:8.5px;font-weight:normal;color:#000;letter-spacing:-0.6px">270</div>
<div class="t" style="left:1014.5px;width:200px;text-align:right;top:719.80px;font-size:8.5px;line-height:8.5px;font-weight:normal;color:#000;letter-spacing:-0.6px">225</div>
<div class="t" style="left:1014.5px;width:200px;text-align:right;top:730.80px;font-size:8.5px;line-height:8.5px;font-weight:normal;color:#000;letter-spacing:-0.6px">180</div>
<div class="t" style="left:1014.5px;width:200px;text-align:right;top:741.80px;font-size:8.5px;line-height:8.5px;font-weight:normal;color:#000;letter-spacing:-0.6px">135</div>
<div class="t" style="left:1014.5px;width:200px;text-align:right;top:752.80px;font-size:8.5px;line-height:8.5px;font-weight:normal;color:#000;letter-spacing:-0.6px">90</div>
<div class="t" style="left:1014.5px;width:200px;text-align:right;top:763.80px;font-size:8.5px;line-height:8.5px;font-weight:normal;color:#000;letter-spacing:-0.6px">45</div>
<div class="t" style="left:1014.5px;width:200px;text-align:right;top:774.80px;font-size:8.5px;line-height:8.5px;font-weight:normal;color:#000;letter-spacing:-0.6px">0</div>
<div class="t" style="left:1014.5px;width:200px;text-align:right;top:785.80px;font-size:8.5px;line-height:8.5px;font-weight:normal;color:#000;letter-spacing:-0.6px">-45</div>
<div class="t" style="left:1014.5px;width:200px;text-align:right;top:796.80px;font-size:8.5px;line-height:8.5px;font-weight:normal;color:#000;letter-spacing:-0.6px">-90</div>
<div class="t" style="left:1014.5px;width:200px;text-align:right;top:807.80px;font-size:8.5px;line-height:8.5px;font-weight:normal;color:#000;letter-spacing:-0.6px">-135</div>
<div class="t" style="left:1014.5px;width:200px;text-align:right;top:818.80px;font-size:8.5px;line-height:8.5px;font-weight:normal;color:#000;letter-spacing:-0.6px">-180</div>
<div class="t" style="left:1014.5px;width:200px;text-align:right;top:829.80px;font-size:8.5px;line-height:8.5px;font-weight:normal;color:#000;letter-spacing:-0.6px">-225</div>
<div class="t" style="left:1014.5px;width:200px;text-align:right;top:840.80px;font-size:8.5px;line-height:8.5px;font-weight:normal;color:#000;letter-spacing:-0.6px">-270</div>
<div class="t" style="left:1014.5px;width:200px;text-align:right;top:851.80px;font-size:8.5px;line-height:8.5px;font-weight:normal;color:#000;letter-spacing:-0.6px">-315</div>
<div class="t" style="left:1122px;width:200px;text-align:center;top:861.23px;font-size:8px;line-height:8px;font-weight:normal;color:#000;letter-spacing:-0.2px">-24</div>
<div class="t" style="left:1153px;width:200px;text-align:center;top:861.23px;font-size:8px;line-height:8px;font-weight:normal;color:#000;letter-spacing:-0.2px">-20</div>
<div class="t" style="left:1183px;width:200px;text-align:center;top:861.23px;font-size:8px;line-height:8px;font-weight:normal;color:#000;letter-spacing:-0.2px">-16</div>
<div class="t" style="left:1214px;width:200px;text-align:center;top:861.23px;font-size:8px;line-height:8px;font-weight:normal;color:#000;letter-spacing:-0.2px">-12</div>
<div class="t" style="left:1245px;width:200px;text-align:center;top:861.23px;font-size:8px;line-height:8px;font-weight:normal;color:#000;letter-spacing:-0.2px">-8</div>
<div class="t" style="left:1275px;width:200px;text-align:center;top:861.23px;font-size:8px;line-height:8px;font-weight:normal;color:#000;letter-spacing:-0.2px">-4</div>
<div class="t" style="left:1306px;width:200px;text-align:center;top:861.23px;font-size:8px;line-height:8px;font-weight:normal;color:#000;letter-spacing:-0.2px">0</div>
<div class="t" style="left:1337px;width:200px;text-align:center;top:861.23px;font-size:8px;line-height:8px;font-weight:normal;color:#000;letter-spacing:-0.2px">4</div>
<div class="t" style="left:1367px;width:200px;text-align:center;top:861.23px;font-size:8px;line-height:8px;font-weight:normal;color:#000;letter-spacing:-0.2px">8</div>
<div class="t" style="left:1398px;width:200px;text-align:center;top:861.23px;font-size:8px;line-height:8px;font-weight:normal;color:#000;letter-spacing:-0.2px">12</div>
<div class="t" style="left:1429px;width:200px;text-align:center;top:861.23px;font-size:8px;line-height:8px;font-weight:normal;color:#000;letter-spacing:-0.2px">16</div>
<div class="t" style="left:1460px;width:200px;text-align:center;top:861.23px;font-size:8px;line-height:8px;font-weight:normal;color:#000;letter-spacing:-0.2px">20</div>
<div class="t" style="left:1490px;width:200px;text-align:center;top:861.23px;font-size:8px;line-height:8px;font-weight:normal;color:#000;letter-spacing:-0.2px">24</div>
<div class="t" style="left:1305px;width:200px;text-align:center;top:874.84px;font-size:12px;line-height:12px;font-weight:bold;color:#000;;letter-spacing:0.2px">Phase 1/48 UI</div>
<div class="t" style="left:1119px;top:774.5px;width:120px;height:12px;line-height:12px;font-size:12px;font-weight:bold;text-align:center;transform:rotate(-90deg);transform-origin:60px 6px">Voltage (mV)</div>
<div class="r" style="left:9px;top:1004px;width:1602px;height:27px;background:#dfdfdf"></div>
<div class="t" style="left:15.5px;top:1012.50px;font-size:12.4px;line-height:12.4px;font-weight:normal;color:#000;;letter-spacing:0.2px">Scanning Completed</div>
<div class="r" style="left:1617px;top:1004px;width:294px;height:27px;background:#dfdfdf"></div>
<svg class="r" style="left:1660px;top:1004px" width="30" height="28" viewBox="0 0 30 28">
<path d="M9.01 2.15L14.66 2.15L14.66 5.78L16.14 6.46L20.45 6.46L25.29 6.46L25.83 11.57L26.9 12.64L26.9 16.41L23.67 17.76L20.45 20.45L19.64 23.41L19.91 25.83L17.76 25.83L14.53 23.41L11.84 18.29L10.22 17.22L7.53 18.83L4.84 15.07L2.02 11.3L8.88 11.03Z" fill="#ff0000"/>
<path d="M16.4 6.5L14.8 17.4M19.9 6.5L18.5 17.2M13.3 11H15.4M18.9 11H21" stroke="#dfdfdf" stroke-width="1.25" fill="none"/>
<path d="M14.5 18.1H19.9" stroke="#dfdfdf" stroke-width="1.6"/>
<path d="M14.66 5.78L16.3 6.46H19.9" stroke="#dfdfdf" stroke-width="1.2" fill="none"/>
<circle cx="18.97" cy="4.3" r="1.25" fill="#ff0000"/>
</svg>
<div class="t" style="left:1695px;top:1008px;font-family:'Liberation Serif',serif;font-weight:bold;font-size:20px;line-height:18px;color:#000;white-space:nowrap;transform:scaleX(0.9);transform-origin:0 0">T<span style="font-size:16px">EXAS</span> I<span style="font-size:16px">NSTRUMENTS</span></div>
<div class="r" style="left:0px;top:1040px;width:1920px;height:1px;background:#000"></div>
</body></html>
